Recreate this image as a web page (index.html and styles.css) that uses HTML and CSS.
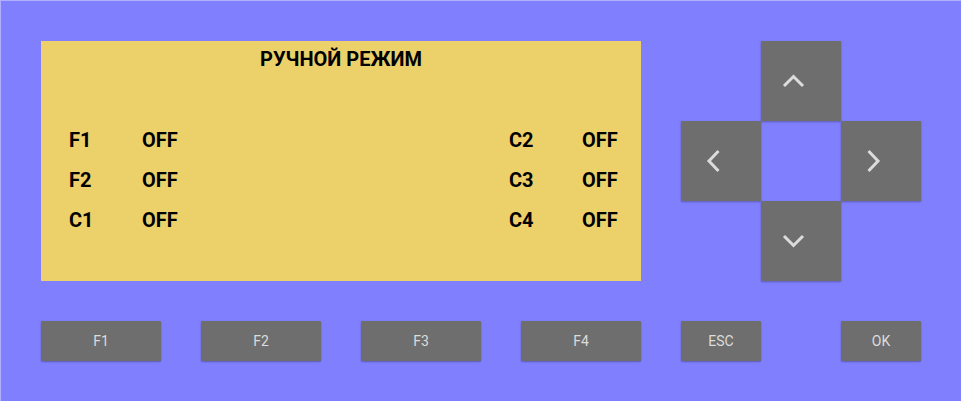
FILE: index.html
```html
<!DOCTYPE html>
<html lang="ru">
<head>
<meta charset="utf-8">
<title>Ручной режим</title>
<link rel="stylesheet" href="styles.css">
</head>
<body>
<div class="device">
  <div class="top">
    <div class="screen">
      <div class="title">РУЧНОЙ РЕЖИМ</div>
      <div class="rows">
        <span>F1</span><span>OFF</span><span>C2</span><span>OFF</span>
        <span>F2</span><span>OFF</span><span>C3</span><span>OFF</span>
        <span>C1</span><span>OFF</span><span>C4</span><span>OFF</span>
      </div>
    </div>
    <div class="dpad">
      <div class="key up"><svg class="chev-h" viewBox="0 0 23 14"><polyline points="2,12 11.5,2.5 21,12"/></svg></div>
      <div class="key left"><svg class="chev-v" viewBox="0 0 15 24"><polyline points="12.5,2 3,12 12.5,22"/></svg></div>
      <div class="key right"><svg class="chev-v" viewBox="0 0 15 24"><polyline points="2.5,2 12,12 2.5,22"/></svg></div>
      <div class="key down"><svg class="chev-h" viewBox="0 0 23 14"><polyline points="2,2 11.5,11.5 21,2"/></svg></div>
    </div>
  </div>
  <div class="buttons">
    <div class="btn wide">F1</div>
    <div class="btn wide">F2</div>
    <div class="btn wide">F3</div>
    <div class="btn wide">F4</div>
    <div class="btn narrow">ESC</div>
    <div class="btn narrow ok">OK</div>
  </div>
</div>
</body>
</html>
```
FILE: styles.css
```css
html, body {
  margin: 0;
  padding: 0;
  background: #8080ff;
}
.device {
  width: 920px;
  height: 320px;
  padding: 40px;
  border-top: 1px solid #b0b0ff;
  border-left: 1px solid #b0b0ff;
  background: #8080ff;
  display: flex;
  flex-direction: column;
  gap: 40px;
  font-family: Roboto, "Liberation Sans", sans-serif;
}
.top {
  display: flex;
  gap: 40px;
}
.screen {
  width: 600px;
  height: 240px;
  box-sizing: border-box;
  padding-left: 28px;
  background: #ecd16b;
  color: #000;
}
.title {
  height: 36px;
  line-height: 36px;
  margin-left: -28px;
  text-align: center;
  font-size: 20px;
  font-weight: 700;
}
.rows {
  margin-top: 43px;
  display: grid;
  grid-template-columns: 73px 367px 73px 1fr;
  grid-auto-rows: 40px;
  align-items: center;
  font-size: 20px;
  font-weight: 700;
}
.dpad {
  display: grid;
  grid-template-columns: repeat(3, 80px);
  grid-template-rows: repeat(3, 80px);
}
.key {
  background: #6e6e6e;
  box-shadow: 0 1px 2px rgba(0, 0, 0, 0.3);
  display: flex;
  align-items: center;
  justify-content: center;
}
.key svg {
  margin-right: 16px;
  fill: none;
  stroke: #dcdcdc;
  stroke-width: 3;
}
.chev-h { width: 23px; height: 14px; }
.chev-v { width: 15px; height: 24px; }
.up { grid-column: 2; grid-row: 1; }
.left { grid-column: 1; grid-row: 2; }
.right { grid-column: 3; grid-row: 2; }
.down { grid-column: 2; grid-row: 3; }
.buttons {
  display: flex;
  gap: 40px;
}
.btn {
  height: 40px;
  background: #6e6e6e;
  box-shadow: 0 1px 2px rgba(0, 0, 0, 0.3);
  border-radius: 1px;
  color: #dcdcdc;
  font-size: 14px;
  display: flex;
  align-items: center;
  justify-content: center;
}
.wide { width: 120px; }
.narrow { width: 80px; }
.ok { margin-left: 40px; }
```
